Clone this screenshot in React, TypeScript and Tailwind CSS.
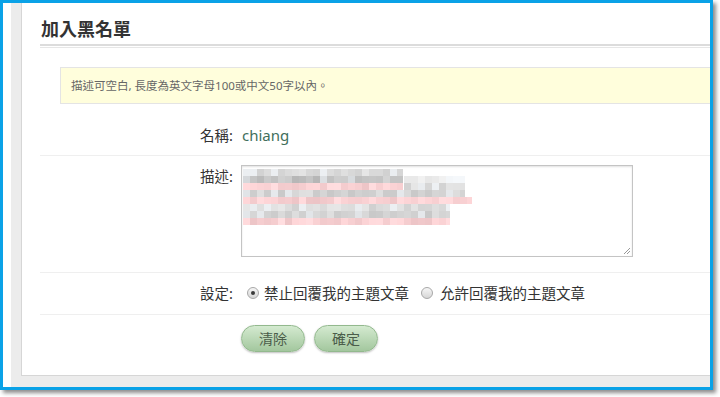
import React from "react";

const FONT = "font-['Noto_Sans','Noto_Sans_CJK_TC',sans-serif]";

function rand(seed: number) {
  let s = seed;
  return () => {
    s = (s * 9301 + 49297) % 233280;
    return s / 233280;
  };
}

type Seg = { to: number; kind: "gray" | "dark" | "light" | "pink" | "pale" };
const rows: Seg[][] = [
  [{ to: 160, kind: "light" }],
  [{ to: 160, kind: "dark" }, { to: 222, kind: "pale" }],
  [{ to: 160, kind: "pink" }, { to: 222, kind: "light" }],
  [{ to: 222, kind: "gray" }],
  [{ to: 229, kind: "pink" }],
  [{ to: 207, kind: "light" }],
  [{ to: 207, kind: "gray" }],
  [{ to: 207, kind: "pink" }],
];

function colorFor(kind: Seg["kind"], r: number) {
  if (kind === "pink") {
    const g = Math.round(196 + r * 26);
    return `rgb(${Math.min(255, g + 40)},${g},${g + 2})`;
  }
  let base = 200;
  let span = 30;
  if (kind === "dark") { base = 180; span = 40; }
  if (kind === "light") { base = 208; span = 30; }
  if (kind === "pale") { base = 230; span = 16; }
  const v = Math.round(base + r * span);
  const tint = r > 0.8 ? 6 : 0;
  return `rgb(${v},${v + tint / 2},${v + tint})`;
}

function Blurred() {
  const rnd = rand(17);
  const rects: React.ReactNode[] = [];
  rows.forEach((segs, ri) => {
    let x = 0;
    segs.forEach((seg) => {
      while (x < seg.to) {
        const w = Math.min(7, seg.to - x);
        rects.push(
          <rect key={`${ri}-${x}`} x={x} y={ri * 7} width={w} height={7} fill={colorFor(seg.kind, rnd())} />
        );
        x += 7;
      }
    });
  });
  return (
    <svg width={232} height={56} viewBox="0 0 232 56" className="block" shapeRendering="crispEdges">
      {rects}
    </svg>
  );
}

function Radio({ checked }: { checked?: boolean }) {
  return (
    <span className="flex h-[12px] w-[12px] items-center justify-center rounded-full border border-[#a8a8a8] bg-gradient-to-b from-[#f6f6f6] to-[#d6d6d6]">
      {checked && <span className="h-[4px] w-[4px] rounded-full bg-[#3a3a3a]" />}
    </span>
  );
}

function Btn({ children }: { children: React.ReactNode }) {
  return (
    <button className="flex h-[27px] w-[64px] items-center justify-center rounded-[14px] border border-[#93b98e] bg-gradient-to-b from-[#d4ead0] to-[#a3c79e] text-[14px] leading-none text-[#4b5d4a] shadow-[0_1px_2px_rgba(0,0,0,0.25)]">
      {children}
    </button>
  );
}

export default function App() {
  return (
    <div className={`relative h-[397px] w-[720px] overflow-hidden bg-white ${FONT}`}>
      <div className="flex h-[390px] w-[713px] border-[3px] border-[#0aa2e7] shadow-[3px_3px_4px_rgba(0,0,0,0.45)]">
        <div className="w-[8px] bg-white" />
        <div className="flex flex-1 flex-col bg-[#ececec] pb-[11px] pl-[10px]">
          <div className="flex flex-1 flex-col border-b border-l border-[#d6d6d6] bg-white">
            <div className="ml-[18px]">
              <div className="border-b-2 border-[#dcdcdc] pb-[3px] pl-[1px] pt-[14px] text-[18px] font-bold leading-[24px] text-[#333]">
                加入黑名單
              </div>
              <div className="mt-[1px] h-px bg-[#e6e6e6]" />
            </div>
            <div className="ml-[38px] mt-[19px] flex h-[37px] items-center border border-r-0 border-[#e4e4e4] bg-[#fffedc] pl-[10px] text-[11.5px] text-[#666]">
              描述可空白, 長度為英文字母100或中文50字以內。
            </div>
            <div className="ml-[18px] flex border-b border-[#efefef] pb-[10px] pt-[21px] text-[14.5px] leading-[20px]">
              <div className="w-[193px] text-right text-[#333]">名稱:</div>
              <div className="ml-[8px] pl-[1px] text-[15px] text-[#3f6f5c]">chiang</div>
            </div>
            <div className="ml-[18px] flex border-b border-[#efefef] pb-[15px] pt-[9px] text-[14.5px] leading-[20px]">
              <div className="w-[193px] pt-[1px] text-right text-[#333]">描述:</div>
              <div className="relative ml-[8px] h-[92px] w-[392px] border border-[#c4c4c4] pl-[1px] pt-[3px] shadow-[inset_0_1px_2px_rgba(0,0,0,0.12)]">
                <Blurred />
                <svg className="absolute bottom-[1px] right-[1px]" width="8" height="8" viewBox="0 0 8 8">
                  <path d="M7 1L1 7M7 4L4 7" stroke="#999" strokeWidth="1" />
                </svg>
              </div>
            </div>
            <div className="ml-[18px] flex items-center border-b border-[#efefef] pb-[11px] pt-[10px] text-[14.5px] leading-[20px] text-[#333]">
              <div className="w-[193px] text-right">設定:</div>
              <div className="ml-[14px] flex items-center">
                <Radio checked />
                <span className="ml-[5px]">禁止回覆我的主題文章</span>
                <span className="ml-[12px]">
                  <Radio />
                </span>
                <span className="ml-[7px]">允許回覆我的主題文章</span>
              </div>
            </div>
            <div className="ml-[219px] mt-[10px] flex gap-[9px]">
              <Btn>清除</Btn>
              <Btn>確定</Btn>
            </div>
          </div>
        </div>
      </div>
    </div>
  );
}
